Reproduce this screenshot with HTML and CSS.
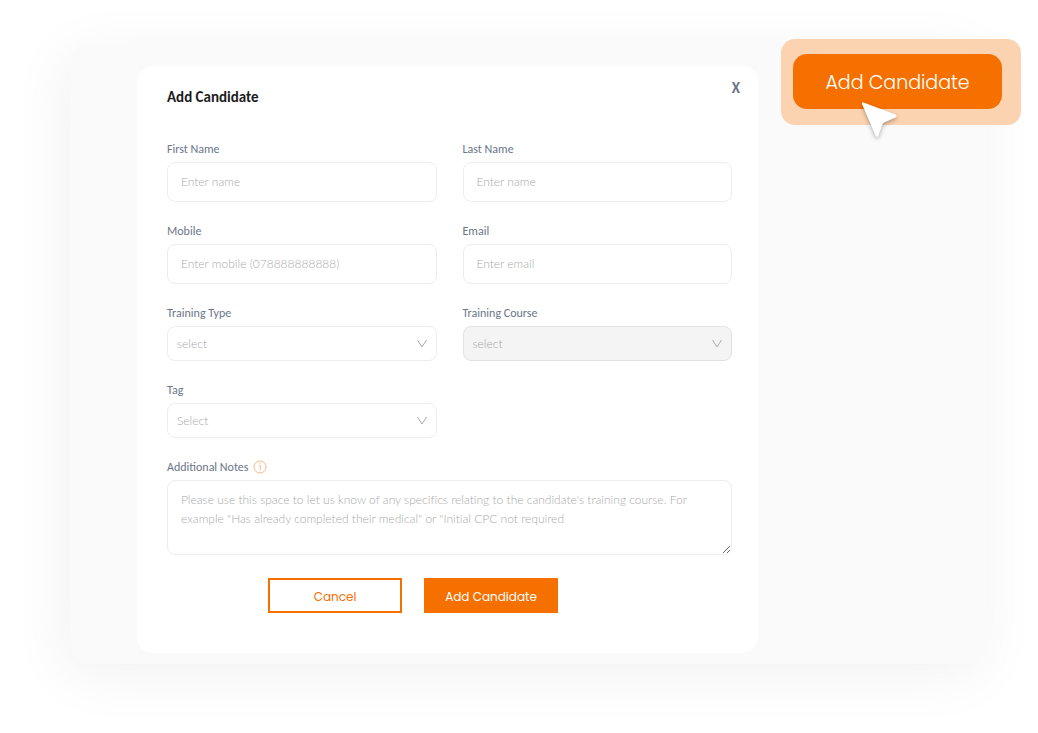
FILE: index.html
```html
<!DOCTYPE html>
<html lang="en">
<head>
    <meta charset="UTF-8">
    <meta name="viewport" content="width=device-width, initial-scale=1.0">
    <title>Add Candidate</title>
    <link rel="stylesheet" href="styles.css">
</head>
<body>
    <main class="panel">
        <section class="modal">
            <header class="modal-header">
                <h2>Add Candidate</h2>
                <button type="button" class="close-button">X</button>
            </header>
            <form class="candidate-form">
                <div class="form-grid">
                    <div class="field">
                        <label for="first-name">First Name</label>
                        <input type="text" id="first-name" placeholder="Enter name">
                    </div>
                    <div class="field">
                        <label for="last-name">Last Name</label>
                        <input type="text" id="last-name" placeholder="Enter name">
                    </div>
                    <div class="field">
                        <label for="mobile">Mobile</label>
                        <input type="tel" id="mobile" placeholder="Enter mobile (078888888888)">
                    </div>
                    <div class="field">
                        <label for="email">Email</label>
                        <input type="email" id="email" placeholder="Enter email">
                    </div>
                    <div class="field">
                        <label for="training-type">Training Type</label>
                        <div class="select-box">
                            <select id="training-type">
                                <option>select</option>
                            </select>
                            <svg class="chevron" viewBox="0 0 10 10"><path d="M0.5 1 L5 8 L9.5 1"/></svg>
                        </div>
                    </div>
                    <div class="field">
                        <label for="training-course">Training Course</label>
                        <div class="select-box">
                            <select id="training-course" disabled>
                                <option>select</option>
                            </select>
                            <svg class="chevron" viewBox="0 0 10 10"><path d="M0.5 1 L5 8 L9.5 1"/></svg>
                        </div>
                    </div>
                    <div class="field">
                        <label for="tag">Tag</label>
                        <div class="select-box">
                            <select id="tag">
                                <option>Select</option>
                            </select>
                            <svg class="chevron" viewBox="0 0 10 10"><path d="M0.5 1 L5 8 L9.5 1"/></svg>
                        </div>
                    </div>
                    <div class="field field-wide">
                        <label for="notes">Additional Notes
                            <svg class="info-icon" viewBox="0 0 14 14">
                                <circle cx="7" cy="7" r="6"/>
                                <path d="M5.8 5.7 H7.2 V10.5 M7.2 3.2 V4.4"/>
                            </svg>
                        </label>
                        <textarea id="notes" placeholder="Please use this space to let us know of any specifics relating to the candidate's training course. For example &quot;Has already completed their medical&quot; or &quot;Initial CPC not required"></textarea>
                    </div>
                </div>
                <div class="form-actions">
                    <button type="button" class="btn btn-outline">Cancel</button>
                    <button type="submit" class="btn btn-primary">Add Candidate</button>
                </div>
            </form>
        </section>

        <div class="callout">
            <button type="button" class="callout-button">Add Candidate</button>
            <svg class="cursor" viewBox="0 0 44 44">
                <path d="M4.5 3.5 L36.5 15.5 Q38.5 17 36.5 18.5 L25 23.5 Q24 24 23.5 25 L19.5 36.5 Q18 39 16.5 36.5 L3 5 Q2.5 3 4.5 3.5 Z"/>
            </svg>
        </div>
    </main>
</body>
</html>
```

FILE: styles.css
```css
* {
    margin: 0;
    padding: 0;
    box-sizing: border-box;
}

body {
    min-height: 100vh;
    background: #ffffff;
    font-family: Carlito, Lato, sans-serif;
    font-size: 12px;
    padding: 44px 50px 20px 70px;
}

.panel {
    position: relative;
    background: #fafafa;
    border-radius: 20px;
    box-shadow: -6px 10px 60px rgba(0, 0, 0, 0.06);
    padding: 22px 230px 11px 67px;
}

.modal {
    background: #ffffff;
    border-radius: 16px;
}

.modal-header {
    display: flex;
    justify-content: space-between;
    align-items: flex-start;
    height: 74px;
    padding: 13px 18px 0 30px;
}

.modal-header h2 {
    color: #1c1c1c;
    font-size: 15px;
    line-height: 18px;
    margin-top: 9px;
}

.close-button {
    border: none;
    background: none;
    color: #6b7689;
    font-family: inherit;
    font-size: 15px;
    font-weight: bold;
    line-height: 18px;
    cursor: pointer;
}

.candidate-form {
    padding: 0 26px 40px 30px;
}

.form-grid {
    display: grid;
    grid-template-columns: 1fr 1fr;
    gap: 20px 26px;
}

.field {
    display: flex;
    flex-direction: column;
    gap: 4px;
}

.field-wide {
    grid-column: 1 / -1;
}

label {
    display: flex;
    align-items: center;
    gap: 5px;
    color: #6b7689;
    font-size: 12px;
    line-height: 18px;
}

input,
select,
textarea {
    width: 100%;
    border: 1px solid #ededf0;
    border-radius: 8px;
    background: #ffffff;
    color: #555555;
    font-family: Lato, sans-serif;
    font-size: 12px;
    font-weight: 300;
    font-variant-ligatures: none;
}

input {
    height: 40px;
    padding: 0 13px 1px;
}

textarea {
    display: block;
    height: 75px;
    padding: 9px 13px;
    line-height: 19px;
    resize: vertical;
}

input::placeholder,
textarea::placeholder {
    color: #aaaaaa;
}

.select-box {
    position: relative;
}

select {
    display: block;
    height: 35px;
    padding: 0 9px;
    color: #a6a6a6;
    appearance: none;
}

select:disabled {
    background: #f4f4f4;
    border-color: #e2e2e2;
    color: #a6a6a6;
    opacity: 1;
}

.chevron {
    position: absolute;
    top: 13px;
    right: 10px;
    width: 10px;
    height: 10px;
    fill: none;
    stroke: #acacac;
    pointer-events: none;
}

.info-icon {
    width: 14px;
    height: 14px;
    fill: none;
    stroke: #f9b984;
}

.form-actions {
    display: flex;
    gap: 22px;
    padding: 23px 0 0 101px;
}

.btn {
    width: 134px;
    height: 35px;
    padding-top: 2px;
    border: 2px solid #f67000;
    font-family: Poppins, Inter, sans-serif;
    font-size: 12px;
    cursor: pointer;
}

.btn-outline {
    background: #ffffff;
    color: #f67000;
}

.btn-primary {
    background: #f67000;
    color: #ffffff;
}

/* highlighted button over the panel corner */
.callout {
    position: absolute;
    top: -5px;
    right: -33px;
    background: #fcd3b0;
    border-radius: 14px;
    padding: 15px 19px 16px 12px;
}

.callout-button {
    display: block;
    width: 209px;
    height: 55px;
    padding-top: 2px;
    border: none;
    border-radius: 14px;
    background: #f67000;
    color: #ffffff;
    font-family: Poppins, Inter, sans-serif;
    font-size: 19px;
    font-weight: 300;
    cursor: pointer;
}

.cursor {
    position: absolute;
    top: 60px;
    left: 78px;
    width: 44px;
    height: 44px;
    fill: #ffffff;
    filter: drop-shadow(0 2px 2px rgba(0, 0, 0, 0.3));
    pointer-events: none;
}
```
